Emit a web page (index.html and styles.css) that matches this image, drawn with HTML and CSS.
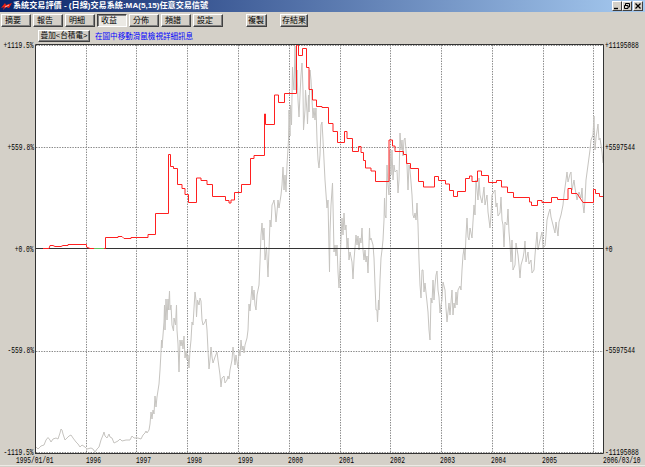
FILE: index.html
```html
<!DOCTYPE html>
<html lang="zh-Hant">
<head>
  <meta charset="UTF-8">
  <title>系統交易評價</title>
  <link rel="stylesheet" href="styles.css">
</head>
<body>
  <div class="window">
    <header class="titlebar">
      <svg class="logo" width="11" height="9" viewBox="0 0 11 9">
        <path d="M0 6 L4 1 L5 3 L11 1 L8 6 L5 5 L2 8 L3 5 Z" fill="#f02010"/>
        <path d="M4 5 L8 3" stroke="#fff" stroke-width="0.7"/>
      </svg>
      <h1>系統交易評價 - (日線)交易系統:MA(5,15)任意交易信號</h1>
      <div class="controls">
        <button><svg width="8" height="8" viewBox="0 0 8 8"><path d="M1 6.5H5" stroke="#000" stroke-width="1.4"/></svg></button>
        <button><svg width="8" height="8" viewBox="0 0 8 8"><path d="M2.5 3V1.5H6.5V5H5M1.5 3.5H5V6.5H1.5Z" fill="none" stroke="#000"/></svg></button>
        <button class="close"><svg width="8" height="8" viewBox="0 0 8 8"><path d="M1.5 1.5L6.5 6.5M6.5 1.5L1.5 6.5" stroke="#000" stroke-width="1.3"/></svg></button>
      </div>
    </header>

    <nav class="toolbar">
      <button>摘要</button>
      <button>報告</button>
      <button>明細</button>
      <button class="active">收益</button>
      <button>分佈</button>
      <button>頻譜</button>
      <button>設定</button>
      <button class="small copy">複製</button>
      <button class="small save">存結果</button>
    </nav>

    <div class="subbar">
      <button>疊加&lt;台積電&gt;</button>
      <span class="hint">在圖中移動滑鼠檢視詳細訊息</span>
    </div>

    <main class="panel">
      <div class="scale left">
        <span>+1119.5%</span>
        <span>+559.8%</span>
        <span>+0.0%</span>
        <span>-559.8%</span>
        <span>-1119.5%</span>
      </div>

      <svg class="chart" width="569" height="410" viewBox="35 44 569 410">
        <rect class="plot" x="35" y="44" width="569" height="410"/>
        <path class="grid" d="M86.5 45V453M136.5 45V453M187.5 45V453M238.5 45V453M289.5 45V453M340.5 45V453M390.5 45V453M441.5 45V453M492.5 45V453M543.5 45V453M593.5 45V453"/>
        <path class="grid" d="M36 45.5H603M36 147.5H603M36 351.5H603M36 452.5H603"/>

        <!-- stock price -->
        <polyline class="price" points="36,447 38,449 41,446 44,445 46,440 48,437.5 50,440 51,442 53,439 56,438 58,439 59,436 60,433 61,429 62,430 63,434 65,440 67,438 69,436 71,435 73,438 76,442 78,444 80,447 82,445 85,447 87,449 91,448 93,449 95,452 97,449 99,447 101,440 103,435 104,432 105,436 107,438 109,434 110,437 112,438 114,443 116,442 118,441 120,439 122,441 126,440 130,440 132,436 134,438 138,438 141,439 143,435 145,433 146,431 147,433 149,430
          150,424 151,412 152,419 153,410 154,414 155,396 156,407 157,397 159,384 160,370 161,352 161.5,340 162,348 163,335 164,322 164.5,305 165,330 166,299 167,320 168,299 168.5,310 169.5,291 170,310 171,305 172,325 173.5,331 174,318 175.5,325 176.5,305 177,330 178,344 179,372 180,340 181,346 182,340 183,349 184,336 185,358 186,351 187,360 188,355 189,368 190,350 191,340 192,322 193,325 194,308 195,292 196,300 196.5,317 197.5,300 199,305 200,298 201,301 202,320 203,325 205,322 206,319 207,330 208,350 209,369 210,360 211,347 212,357 213,363 215,357 217,352 218,360 220,375 221,387 222,378 224,376 225,383 227,380 228,376 229,379 230,370 232,360 233,347 234,355 235,365 236,355 237,362 238,368 239,350 240,356 241,340 242,350 243,346 244,353
          245,345 247,338 248,330 249,304 250,311 252,286 253,300 254,290 255,305 256,310 257,295 259,285 260,262 261,235 262,223 263,240 264,228 265,260 266.5,247 268,277 269,250 270,220 271,227 272,205 273,203 274,200 275,208 276,222 277,212 278,200 279,208 281,195 282,185 283,167 284,190 285,175 286,192 287,165 288.5,140 289,110 290,136 290.5,105 291.5,125 292.5,67 293,78 294,90 295,46 296,90 297,70 298,100 299,117 300,95 301,75 302,63 303,90 303.5,130 305,110 305.5,90 307,112 307.5,124 308.5,95 309,112 310,70 311,80 312,100 313,118 314,108 315,120 316,108 317,140 318,160 319,168 320,155 321,125 322,122 323,140 324,160 325,180 327,208 328,200 328.5,225 329.5,272 330,232 331,205 332.5,183 333,205 334,252 335,245 336,256 337,245
          338,272 339,288 340,265 341,240 342,218 343,235 344,213 345,230 346,225 347,248 348,238 349,260 350,252 352,262 353,279 354,260 356,235 357,245 358,236 359,250 360,238 361,243 362,228 363,250 364,260 365,250 366,262 367,256 368,273 369,245 369.5,228 370,240 371,238 373,245 374,258 375,285 376,310 377,310 377.5,322 378.5,300 379,310 380,280 381,258 382,250 383,240 384,220 384.5,198 385,215 386,218 387,165 388,185 389,195 390,150 391,175 392,150 393,180 394,165 395,172 397,170 398,193 399,180 400,133 401,150 402,140 403,156 404,140 405,138 406,150 407,165 408,190 409,165 410,170 411,182 412,195 413,215 414,218 415,213 416,220 417,203 418,225 419,260 420,285 421,298 422,270 423,270 424,292 425,283 427,302 428,312 429,330 430,340 431,298 432,303 433,280
          434,300 435,285 436,275 437,271 438,290 439,297 440,313 441,305 442,300 443,282 445,290 446,308 447,322 448,312 449,303 450,315 452,290 453,315 454,303 455,308 456,292 457,305 458,290 460,286 461,290 462,270 463,255 464,249 465,260 466,235 467,218 468,237 469,240 470,228 472,238 474,205 475,215 476,180 477,190 478,200 479,178 480,195 482,203 484,187 485,205 487,195 488,212 490,228 491,215 492,195 495,190 496,207 497,203 498,216 500,213 501,197 502,220 503,225 504,247 505,222 507,225 508,209 509,232 510,244 511,262 512,240 513,270 515,265 516,243 518,255 519,265 520,278 521,265 523,258 524,252 525,241 526,262 528,252 529,264 531,260 532,273 534,270 535,255 537,232 538,250 540,240 542,232 543,248 545,246
          546,235 547,220 549,212 550,209 551,217 553,225 555,233 556,222 558,236 559,222 561,215 563,205 564,195 566,180 567,172 568,182 570,174 571,172 572,190 574,180 575,188 577,200 579,192 581,198 582,188 583,205 584,213 585,200 586,180 588,165 590,150 591,140 593,135 594,116 595,150 596,138 598,124 599,140 600,138 602,152 603,163"/>

        <path class="zero" d="M35 248.5H604"/>

        <!-- cumulative return -->
        <path class="flat" d="M94 248.5H105"/>
        <path class="profit" d="M43 248.5H49L50 245.5H53L55 246.5H61L63 245.5H68V244.5H86.5V247L90 248.5H94M104 248.5H105.5V237.5H118V236.5H122L124 238.5H131V237.5H148V234.5H155.5V213.5H168.5V154.5H170.5V166.5H173.5V168.5H177.5V184.5H182V188.5H185V194.5H188.5V202.5H196.5V178H201V180.5H207V184.5H212.5V196.5H225.5V200.5H229V203H231V200H234.5V192.5H241.5V184.5H250.5V158.5H254V155.5H264.5V114H265.5V124.5H274.5V95H278.5V102.5H284.5V93.5H296.5V45H298.5V55.5H302.5V48.5H306.5V67.5H309V89.5H312.5V100H316.5V106.5H322V107.5H328.5V123.5H333V131.5H337.5V142.5H344.5V131.5H347V138.5H352.5V151.5H358.5V146.5H361V152.5H363.5V160.5H365.5V168H371V171H375.5V181.5H389V140H392.5V146H395V151.5H403.5V154.5H406.5V163.5H410.5V168.5H418.5V181.5H423.5V187H434.5V176.5H438.5V180.5H445.5V184H449.5V190.5H453.5V196.5H457.5V191.5H465.5V178.5H469.5V176H472V181.5H477.5V171H481.5V175.5H488.5V182.5H496.5V180.5H501.5V187H507.5V192.5H513.5V197.5H529.5V202H531.5V205.5H537.5V200.5H542V202.5H551.5V197.5H557.5V199.5H568V188.5H571.5V193.5H577L583 202.5H593.5V189.5H595.5V193.5H599.5V196.5H603"/>
        <path class="frame" d="M35.5 454V44.5H603.5V453.5H35"/>
      </svg>

      <div class="scale right">
        <span>+11195088</span>
        <span>+5597544</span>
        <span>+0</span>
        <span>-5597544</span>
        <span>-11195088</span>
      </div>
    </main>

    <footer class="years">
      <span>1995/01/01</span>
      <span>1996</span>
      <span>1997</span>
      <span>1998</span>
      <span>1999</span>
      <span>2000</span>
      <span>2001</span>
      <span>2002</span>
      <span>2003</span>
      <span>2004</span>
      <span>2005</span>
      <span>2006/03/10</span>
    </footer>
  </div>
</body>
</html>
```
FILE: styles.css
```css
:root {
  --face: #d4d0c8;
  --shadow: #808080;
  --dark: #404040;
}

* {
  box-sizing: border-box;
}

body {
  margin: 0;
  font-family: "Liberation Sans", "Noto Sans CJK TC", sans-serif;
  background: var(--face);
  color: #000;
}

.window {
  width: 645px;
  height: 467px;
  overflow: hidden;
}

.titlebar {
  display: flex;
  align-items: center;
  height: 12px;
  padding: 0 2px 0 1px;
  background: linear-gradient(to right, #0a246a, #a6caf0);
}

h1 {
  margin: 0 auto 0 1px;
  font-size: 8.12px;
  line-height: 12px;
  font-weight: bold;
  color: #fff;
  white-space: nowrap;
}

button {
  padding: 0;
  border: 1px solid;
  border-color: #fff var(--dark) var(--dark) #fff;
  box-shadow: inset -1px -1px 0 var(--shadow);
  background: var(--face);
  font-family: inherit;
  font-size: 8px;
  line-height: 10px;
  color: #000;
  white-space: nowrap;
}

.controls {
  display: flex;
}

.controls button {
  width: 10px;
  height: 10px;
  box-shadow: none;
}

.controls svg {
  display: block;
}

.controls .close {
  margin-left: 1px;
}

.toolbar {
  display: flex;
  gap: 2px;
  height: 16px;
  padding: 2px 0 1px 1px;
}

.toolbar button {
  width: 30px;
  height: 13px;
  padding: 0 0 0 3px;
  text-align: left;
}

.toolbar .active {
  border-color: var(--dark) #fff #fff var(--dark);
  box-shadow: inset 1px 1px 0 var(--shadow);
  background: #ebe9e4;
}

.toolbar .small {
  width: 21px;
  padding: 0 0 0 1px;
}

.toolbar .copy {
  margin-left: 21px;
}

.toolbar .save {
  width: 28px;
  margin-left: 11px;
}

.subbar {
  display: flex;
  align-items: center;
  gap: 5px;
  height: 16px;
  padding: 2px 0 2px 38px;
}

.subbar button {
  width: 52px;
  height: 12px;
  font-size: 7.6px;
}

.hint {
  font-size: 7.55px;
  line-height: 11px;
  color: #00f;
}

.panel {
  display: grid;
  grid-template-columns: 35px 569px 41px;
  height: 410px;
}

.chart {
  display: block;
}

.plot {
  fill: #fff;
}

.grid {
  fill: none;
  stroke: #888;
  stroke-dasharray: 1.4 1.2;
}

.price {
  fill: none;
  stroke: #c6c4c0;
}

.zero {
  stroke: #333;
}

.flat {
  stroke: #5fc45f;
}

.profit {
  fill: none;
  stroke: #ff2020;
}

.frame {
  fill: none;
  stroke: #333;
}

.scale {
  display: flex;
  flex-direction: column;
  justify-content: space-between;
  height: 415px;
  margin-top: -2px;
}

.scale span,
.years span {
  font-family: "Liberation Mono", monospace;
  font-size: 9.5px;
  line-height: 8px;
  white-space: nowrap;
  transform: scaleX(0.66);
  transform-origin: left;
}

.left span {
  align-self: flex-end;
  transform-origin: right;
}

.left {
  padding-right: 1px;
}

.right {
  padding-left: 1px;
}

.years {
  display: flex;
  align-items: flex-end;
  height: 12px;
  padding-left: 16px;
  border-bottom: 1px solid #eceae6;
}

.years span {
  flex: 0 0 50.7px;
  line-height: 8px;
}

.years span:first-child {
  flex-basis: 69.5px;
}

.years span:nth-last-child(2) {
  flex-basis: 61px;
}
```
